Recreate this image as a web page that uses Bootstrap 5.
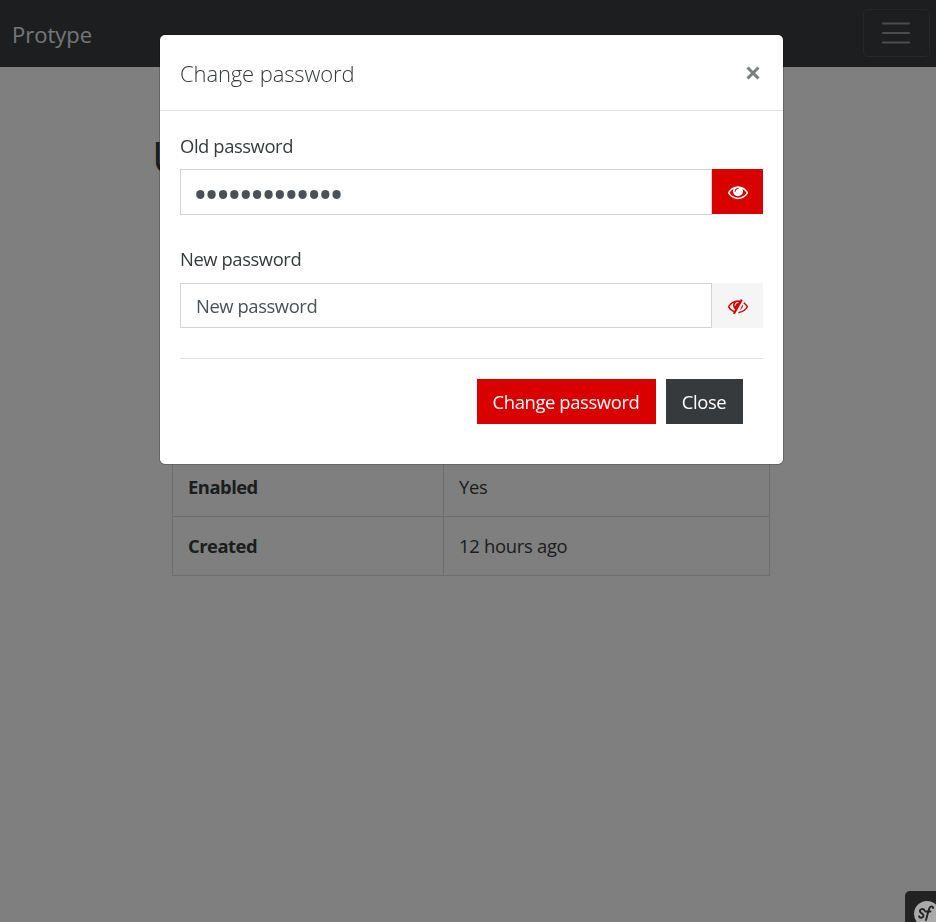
<!DOCTYPE html>
<html lang="en">
<head>
<meta charset="utf-8">
<meta name="viewport" content="width=device-width, initial-scale=1">
<title>Protype</title>
<link rel="stylesheet" href="https://cdn.jsdelivr.net/npm/bootstrap@5.3.0/dist/css/bootstrap.min.css">
<style>
  body { font-family: "Open Sans", "Noto Sans", sans-serif; font-size: 18.4px; line-height: 27px; color: #373a3c; overflow: hidden; height: 100vh; letter-spacing: -.42px; }
  .topbar { height: 67px; background: #3a3d40; padding: 0 6px 0 12px; }
  .topbar .navbar-brand { font-size: 22px; color: #fff; opacity: .9; padding: 2px 0 0; letter-spacing: 0; }
  .topbar .navbar-toggler { width: 67px; height: 48px; padding: 0 1px 0 0; border: 1px solid #4d5052; border-radius: 5px; margin-top: -1px; }
  .page { width: 630px; margin-left: 152px; padding-top: 65px; }
  .page h1 { font-size: 43px; line-height: 50px; font-weight: 400; margin: 0 0 275px; }
  .facts { width: 598px; margin: 0 0 0 20px; color: inherit; letter-spacing: -.28px; }
  .facts th, .facts td { height: 59px; padding: 0 15px 2px; border: 1px solid #dcdddf; vertical-align: middle; color: inherit; }
  .facts th { width: 271px; letter-spacing: -.5px; }
  .profiler { right: 0; bottom: 0; width: 31px; height: 31px; background: #222; border-top-left-radius: 5px; overflow: hidden; z-index: 2000; }
  .dialog-box { width: 623px; max-width: none; margin: 35px 0 0 160px; }
  .dialog-box .modal-content { height: 429px; border: 0; border-radius: 5px; box-shadow: 0 0 0 1px rgba(0,0,0,.2); color: #373a3c; }
  .dialog-box .modal-header { height: 76px; padding: 2px 23px 0 20px; border-bottom: 1px solid #dee2e6; }
  .dialog-box .modal-title { font-size: 22px; font-weight: 300; letter-spacing: -.12px; }
  .dismiss { width: 14px; height: 14px; padding: 0; border: 0; background: none; display: flex; margin-top: -2px; }
  .dialog-box .modal-body { padding: 23px 20px 0; flex: none; }
  .dialog-box .form-label { display: block; margin: 0; height: 35px; line-height: 23px; }
  .field { height: 45px; flex-wrap: nowrap; }
  .field .form-control { height: 45px; border: 1px solid #ced4da; border-radius: 0; padding: 0 15px 0; font-size: 18.4px; color: #495057; letter-spacing: inherit; box-shadow: none; }
  .field .form-control::placeholder { color: #495057; opacity: 1; }
  .field .form-control.dots { height: 46px; font-size: 39px; letter-spacing: -3.3px; padding: 2px 0 0 12px; line-height: 40px; }
  .field .btn { width: 51px; height: 45px; padding: 1px 0 0 0; border: 0; border-radius: 0; margin-left: 0 !important; display: flex; align-items: center; justify-content: center; }
  .gap-field { padding-top: 33px; }
  .gap-field .form-label { height: 36px !important; }
  .bg-alert { background: #d90000; color: #fff; }
  .bg-pale { background: #f5f5f5; color: #d90000; }
  .dialog-box .modal-footer { margin: 30px 20px 0; padding: 20px; border-top: 1px solid #dee2e6; gap: 10px; }
  .dialog-box .modal-footer .btn { margin: 0; height: 45px; border: 0; border-radius: 0; padding: 0 1px 0 0; font-size: 18.4px; color: #fff; letter-spacing: -.38px; }
  .save { width: 179px; background: #d90000; }
  .shut { width: 77px; background: #373a3c; }
</style>
<script src="https://cdn.jsdelivr.net/npm/bootstrap@5.3.0/dist/js/bootstrap.bundle.min.js"></script>
</head>
<body>
<nav class="topbar navbar navbar-dark d-flex justify-content-between align-items-center">
  <a class="navbar-brand m-0" href="#">Protype</a>
  <button class="navbar-toggler d-flex align-items-center justify-content-center" type="button" aria-label="Menu">
    <svg width="30" height="24" viewBox="0 0 30 24" stroke="#97999a" stroke-width="2.2" stroke-linecap="round"><path d="M2 2.500h26M2 12h26M2 21.500h26"/></svg>
  </button>
</nav>
<main class="page">
  <h1>U</h1>
  <table class="facts">
    <tr><th>Enabled</th><td>Yes</td></tr>
    <tr><th>Created</th><td>12 hours ago</td></tr>
  </table>
</main>
<div class="modal-backdrop show"></div>
<div class="modal show d-block" tabindex="-1">
  <div class="modal-dialog dialog-box">
    <div class="modal-content">
      <div class="modal-header">
        <h5 class="modal-title">Change password</h5>
        <button class="dismiss" type="button" aria-label="Close"><svg width="14" height="14" viewBox="0 0 14 14" stroke="#7b7f82" stroke-width="3"><path d="M1.500 1.500l11 11M12.500 1.500l-11 11"/></svg></button>
      </div>
      <div class="modal-body">
        <label class="form-label" for="old">Old password</label>
        <div class="input-group field">
          <input class="form-control dots" id="old" type="password" value="correcthorse1">
          <button class="btn bg-alert" type="button" aria-label="Hide"><svg width="20" height="20" viewBox="0 0 1792 1792" fill="currentColor"><path d="M1664 960q-152-236-381-353 61 104 61 225 0 185-131.500 316.500t-316.500 131.500-316.500-131.500-131.500-316.500q0-121 61-225-229 117-381 353 133 205 333.500 326.500t434.500 121.500 434.500-121.500 333.500-326.500zm-720-384q0-20-14-34t-34-14q-125 0-214.500 89.500t-89.500 214.500q0 20 14 34t34 14 34-14 14-34q0-86 61-147t147-61q20 0 34-14t14-34zm848 384q0 34-20 69-140 230-376.500 368.500t-499.500 138.500-499.500-139-376.500-368q-20-35-20-69t20-69q140-229 376.500-368t499.500-139 499.500 139 376.500 368q20 35 20 69z"/></svg></button>
        </div>
        <div class="gap-field">
          <label class="form-label" for="new">New password</label>
          <div class="input-group field">
            <input class="form-control" id="new" type="password" placeholder="New password">
            <button class="btn bg-pale" type="button" aria-label="Show"><svg width="20" height="20" viewBox="0 0 1792 1792" fill="currentColor"><path d="M555 1335l78-141q-87-63-136-159t-49-203q0-121 61-225-229 117-381 353 167 258 427 375zm389-759q0-20-14-34t-34-14q-125 0-214.500 89.500t-89.500 214.500q0 20 14 34t34 14 34-14 14-34q0-86 61-147t147-61q20 0 34-14t14-34zm363-191q0 7-1 9-106 189-316 567t-315 566l-49 89q-10 16-28 16-12 0-134-70-16-10-16-28 0-12 44-87-143-65-263.500-173t-208.500-245q-20-31-20-69t20-69q153-235 380-371t496-136q89 0 180 17l54-97q10-16 28-16 5 0 18 6t31 15.500 33 18.500 31.500 18.500 19.500 11.500q16 10 16 27zm37 447q0 139-79 253.500t-209 164.500l280-502q8 45 8 84zm448 128q0 35-20 69-39 64-109 145-150 172-347.500 267t-419.500 95l74-132q212-18 392.500-137t301.500-307q-115-179-282-294l63-112q95 64 182.500 153t144.500 184q20 34 20 69z"/></svg></button>
          </div>
        </div>
      </div>
      <div class="modal-footer">
        <button class="btn save" type="button">Change password</button>
        <button class="btn shut" type="button">Close</button>
      </div>
    </div>
  </div>
</div>
<div class="profiler position-fixed">
  <svg class="d-block" width="31" height="31" viewBox="0 0 31 31"><circle cx="22" cy="23" r="13" fill="#aaa"/><g fill="none" stroke="#222" stroke-linecap="round"><path d="M19.500 19.500c-1-2.500-5-1.500-4.500 1 .4 2 4 2 3.500 4.500-.5 2.300-4 2.300-4.500.3" stroke-width="1.900"/><path d="M28 17c0-2.500-3-2.200-4 1l-3 11M20.500 20.500h5" stroke-width="1.900"/></g></svg>
</div>
</body>
</html>
